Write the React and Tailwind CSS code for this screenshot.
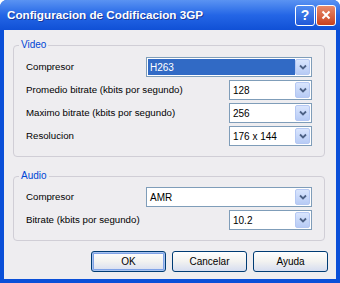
import React from 'react';

const font = { fontFamily: '"Liberation Sans", Arial, sans-serif' };

const Flecha = () => (
  <div className="flex h-full w-[15px] items-center justify-center rounded-[2px] border border-[#B5C8F3] bg-gradient-to-b from-[#D9E5FD] to-[#B7CBF5]">
    <svg width="8" height="6" viewBox="0 0 8 6">
      <path d="M1 1.5 L4 4.5 L7 1.5" fill="none" stroke="#4D6185" strokeWidth="1.8" />
    </svg>
  </div>
);

const Combo = ({ valor, ancho, seleccionado = false }) => (
  <div className={`flex h-[20px] ${ancho} border border-[#7F9DB9] bg-white p-[1px]`}>
    <div
      className={`flex flex-1 items-center px-[2px] text-[10px] ${
        seleccionado ? 'bg-[#316AC5] text-white' : 'text-black'
      }`}
    >
      {valor}
    </div>
    <Flecha />
  </div>
);

const Fila = ({ etiqueta, children }) => (
  <div className="flex h-[20px] items-center justify-between">
    <span className="text-[9.7px] text-black">{etiqueta}</span>
    {children}
  </div>
);

const Grupo = ({ titulo, className = '', children }) => (
  <fieldset className={`rounded-[4px] border border-[#D0CED6] px-[5px] ${className}`}>
    <legend className="px-[2px] text-[10px] leading-[12px] text-[#0046D5]">{titulo}</legend>
    <div className="flex flex-col gap-[3px] px-[7px]">{children}</div>
  </fieldset>
);

const Boton = ({ texto, principal = false }) => (
  <button
    className={`flex h-[21px] w-[75px] items-center justify-center rounded-[3px] border border-[#003C74] bg-gradient-to-b from-[#FFFFFF] via-[#F2F2F0] to-[#D6DDF0] text-[10px] text-black ${
      principal ? 'shadow-[inset_0_0_0_1px_#A8C3F0,inset_0_0_0_2px_#7FA2E6]' : ''
    }`}
  >
    {texto}
  </button>
);

export default function App() {
  return (
    <div className="h-[283px] w-[340px] overflow-hidden" style={font}>
      <div className="flex h-full flex-col rounded-t-[7px] bg-[#0A4FD8]">
        {/* Barra de título */}
        <div className="flex h-[30px] items-center justify-between rounded-t-[7px] bg-gradient-to-b from-[#5A93F2] via-[#2466E6] to-[#1050D6] pl-[7px] pr-[4px]">
          <span className="text-[11.7px] font-bold text-white [text-shadow:1px_1px_0_#1A3A9A]">
            Configuracion de Codificacion 3GP
          </span>
          <div className="flex gap-[1px]">
            <div className="flex h-[21px] w-[20px] items-center justify-center rounded-[3px] border border-white bg-gradient-to-b from-[#4F8AF0] to-[#2058D8] text-[14px] font-bold text-white">
              ?
            </div>
            <div className="flex h-[21px] w-[20px] items-center justify-center rounded-[3px] border border-white bg-gradient-to-b from-[#E88A6A] to-[#C8401C]">
              <svg width="10" height="10" viewBox="0 0 10 10">
                <path d="M1.5 1.5 L8.5 8.5 M8.5 1.5 L1.5 8.5" stroke="white" strokeWidth="2" />
              </svg>
            </div>
          </div>
        </div>

        {/* Cuerpo */}
        <div className="mx-[4px] mb-[4px] flex flex-1 flex-col bg-[#EEEDF0] pl-[9px] pr-[11px] pt-[9px]">
          <Grupo titulo="Video" className="pb-[10px] pt-[6px]">
            <Fila etiqueta="Compresor">
              <Combo valor="H263" ancho="w-[166px]" seleccionado />
            </Fila>
            <Fila etiqueta="Promedio bitrate (kbits por segundo)">
              <Combo valor="128" ancho="w-[83px]" />
            </Fila>
            <Fila etiqueta="Maximo bitrate (kbits por segundo)">
              <Combo valor="256" ancho="w-[83px]" />
            </Fila>
            <Fila etiqueta="Resolucion">
              <Combo valor="176 x 144" ancho="w-[83px]" />
            </Fila>
          </Grupo>

          <Grupo titulo="Audio" className="mt-[13px] pb-[10px] pt-[5px]">
            <Fila etiqueta="Compresor">
              <Combo valor="AMR" ancho="w-[166px]" />
            </Fila>
            <Fila etiqueta="Bitrate (kbits por segundo)">
              <Combo valor="10.2" ancho="w-[83px]" />
            </Fila>
          </Grupo>

          <div className="-mr-[3px] mt-[10px] flex justify-end gap-[6px]">
            <Boton texto="OK" principal />
            <Boton texto="Cancelar" />
            <Boton texto="Ayuda" />
          </div>
        </div>
      </div>
    </div>
  );
}
